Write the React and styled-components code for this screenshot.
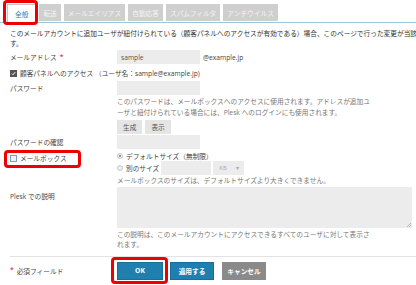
import React from 'react'
import styled, { createGlobalStyle } from 'styled-components'

const GlobalStyle = createGlobalStyle`
  html, body {
    margin: 0;
    padding: 0;
    background: #fff;
  }
  body {
    width: 416px;
    height: 285px;
    overflow: hidden;
    font-family: "Open Sans", "Noto Sans CJK JP", sans-serif;
    font-size: 6.7px;
    color: #444;
  }
`

const Page = styled.div`
  position: relative;
  width: 416px;
  height: 285px;
  overflow: hidden;
`

const Tabs = styled.div`
  display: flex;
  align-items: flex-end;
  gap: 3px;
  height: 22px;
  padding-left: 7px;
  border-bottom: 1px solid #9cc6dc;
`

const Tab = styled.div`
  height: ${({ active }) => (active ? '19px' : '17px')};
  margin-bottom: ${({ active }) => (active ? '-1px' : '1px')};
  padding: 0 ${({ active }) => (active ? '7px' : '3px')};
  display: flex;
  align-items: center;
  box-sizing: border-box;
  background: ${({ active }) => (active ? '#fff' : '#cfcfcf')};
  border: 1px solid ${({ active }) => (active ? '#c5c5c5' : '#cfcfcf')};
  border-bottom-color: ${({ active }) => (active ? '#fff' : '#cfcfcf')};
  color: ${({ active }) => (active ? '#2f7fb5' : '#f4f4f4')};
  white-space: nowrap;
`

const Intro = styled.div`
  padding: 6px 0 0 10px;
  width: 406px;
  line-height: 10px;
  color: #333;
`

const IntroLine = styled.div`
  height: 10px;
  overflow: hidden;
  white-space: nowrap;
`

const Form = styled.div`
  display: flex;
  flex-direction: column;
  padding-left: 10px;
`

const Row = styled.div`
  display: grid;
  grid-template-columns: 107px 1fr;
  align-items: ${({ top }) => (top ? 'start' : 'center')};
  margin-top: ${({ gap }) => gap || 0}px;
`

const Label = styled.div`
  color: #444;
  white-space: nowrap;
  padding-top: ${({ pad }) => pad || 0}px;
  display: flex;
  align-items: center;
  gap: 3px;
`

const Req = styled.span`
  color: #d0021b;
`

const Field = styled.div`
  display: flex;
  align-items: center;
  gap: 3px;
`

const Input = styled.div`
  width: ${({ w }) => w || 83}px;
  height: 14px;
  box-sizing: border-box;
  padding-left: 4px;
  margin-left: ${({ ml }) => ml || 0}px;
  background: #ececec;
  display: flex;
  align-items: center;
  color: #555;
`

const Help = styled.div`
  width: ${({ w }) => w || 256}px;
  line-height: 10.5px;
  color: #777;
  margin-top: 2px;
`

const SmallButton = styled.div`
  height: 14px;
  padding: 0 6px;
  background: #e5e5e5;
  display: flex;
  align-items: center;
  color: #555;
`

const CheckBox = styled.span`
  width: 7px;
  height: 7px;
  box-sizing: border-box;
  border: 1px solid ${({ checked }) => (checked ? '#555' : '#7d9cc6')};
  background: ${({ checked }) => (checked ? '#555' : '#eef2f8')};
  display: inline-flex;
  align-items: center;
  justify-content: center;
  flex: none;
`

const Check = ({ checked }) => (
  <CheckBox checked={checked}>
    {checked && (
      <svg width="5" height="5" viewBox="0 0 5 5">
        <path d="M0.8 2.6 L2 3.8 L4.3 1" fill="none" stroke="#fff" strokeWidth="0.9" />
      </svg>
    )}
  </CheckBox>
)

const Radio = styled.span`
  width: 6px;
  height: 6px;
  box-sizing: border-box;
  border-radius: 50%;
  border: 1px solid #c8c8c8;
  background: ${({ checked }) => (checked ? 'radial-gradient(circle, #999 0 1.2px, #eee 1.4px)' : '#f0f0f0')};
  display: inline-block;
  margin-right: 3px;
`

const Radios = styled.div`
  display: flex;
  flex-direction: column;
`

const RadioLine = styled.div`
  display: flex;
  align-items: center;
  height: 12px;
  color: #444;
`

const Select = styled.div`
  width: 31px;
  height: 14px;
  margin-left: 2px;
  box-sizing: border-box;
  padding: 0 5px 0 6px;
  background: #ececec;
  display: flex;
  align-items: center;
  justify-content: space-between;
  color: #aaa;
  font-size: 6px;
`

const Textarea = styled.div`
  width: 295px;
  height: 41px;
  background: #ececec;
  position: relative;
  &::after {
    content: '';
    position: absolute;
    right: 1px;
    bottom: 1px;
    width: 4px;
    height: 4px;
    background: linear-gradient(135deg, transparent 45%, #bbb 45% 55%, transparent 55% 70%, #bbb 70% 80%, transparent 80%);
  }
`

const Separator = styled.div`
  margin: 5px 0 0 10px;
  border-top: 1px solid #e3e3e3;
`

const Footer = styled.div`
  display: grid;
  grid-template-columns: 107px 1fr;
  align-items: center;
  padding: 5px 0 0 10px;
`

const Actions = styled.div`
  display: flex;
  gap: 7px;
`

const Button = styled.div`
  height: 18px;
  width: ${({ w }) => w}px;
  box-sizing: border-box;
  display: flex;
  align-items: center;
  justify-content: center;
  font-weight: bold;
  color: #fff;
  background: ${({ gray }) => (gray ? '#8a8a8a' : '#1f80b0')};
  border: 1px solid ${({ gray }) => (gray ? '#8a8a8a' : '#1a6f99')};
  margin-left: ${({ ml }) => ml || 0}px;
`

const Highlight = styled.div`
  position: absolute;
  left: ${({ x }) => x}px;
  top: ${({ y }) => y}px;
  width: ${({ w }) => w}px;
  height: ${({ h }) => h}px;
  box-sizing: border-box;
  border: 3px solid #ee0000;
  border-radius: 4px;
  pointer-events: none;
`

const tabs = ['全般', '転送', 'メールエイリアス', '自動応答', 'スパムフィルタ', 'アンチウイルス']

export default function App() {
  return (
    <Page>
      <GlobalStyle />
      <Tabs>
        {tabs.map((t, i) => (
          <Tab key={t} active={i === 0}>
            {t}
          </Tab>
        ))}
      </Tabs>
      <Intro>
        <IntroLine>
          このメールアカウントに追加ユーザが紐付けられている（顧客パネルへのアクセスが有効である）場合、このページで行った変更が当該ユー
        </IntroLine>
        <IntroLine>す。</IntroLine>
      </Intro>
      <Form>
        <Row gap={1}>
          <Label>
            メールアドレス <Req>*</Req>
          </Label>
          <Field>
            <Input>sample</Input>
            <span>@example.jp</span>
          </Field>
        </Row>
        <Row gap={4}>
          <Label>
            <Check checked /> 顧客パネルへのアクセス （ユーザ名：sample@example.jp)
          </Label>
        </Row>
        <Row gap={3}>
          <Label>パスワード</Label>
          <Field>
            <Input />
          </Field>
        </Row>
        <Row>
          <span />
          <Help>
            このパスワードは、メールボックスへのアクセスに使用されます。アドレスが追加ユーザと紐付けられている場合には、Plesk
            へのログインにも使用されます。
          </Help>
        </Row>
        <Row gap={2}>
          <span />
          <Field>
            <SmallButton>生成</SmallButton>
            <SmallButton>表示</SmallButton>
          </Field>
        </Row>
        <Row gap={1}>
          <Label>パスワードの確認</Label>
          <Field>
            <Input />
          </Field>
        </Row>
        <Row gap={1} top>
          <Label pad={3}>
            <Check /> メールボックス
          </Label>
          <Radios>
            <RadioLine>
              <Radio checked />
              デフォルトサイズ（無制限）
            </RadioLine>
            <RadioLine>
              <Radio />
              別のサイズ
              <Input w={50} ml={2} />
              <Select>
                KB <span>▾</span>
              </Select>
            </RadioLine>
            <Help w={300}>メールボックスのサイズは、デフォルトサイズより大きくできません。</Help>
          </Radios>
        </Row>
        <Row top>
          <Label pad={4}>Plesk での説明</Label>
          <Textarea />
        </Row>
        <Row>
          <span />
          <Help>この説明は、このメールアカウントにアクセスできるすべてのユーザに対して表示されます。</Help>
        </Row>
      </Form>
      <Separator />
      <Footer>
        <Label>
          <Req>*</Req> 必須フィールド
        </Label>
        <Actions>
          <Button w={46}>OK</Button>
          <Button w={44}>適用する</Button>
          <Button w={44} gray ml={1}>
            キャンセル
          </Button>
        </Actions>
      </Footer>
      <Highlight x={3} y={0} w={35} h={25} />
      <Highlight x={4} y={150} w={77} h={18} />
      <Highlight x={111} y={257} w={57} h={27} />
    </Page>
  )
}
